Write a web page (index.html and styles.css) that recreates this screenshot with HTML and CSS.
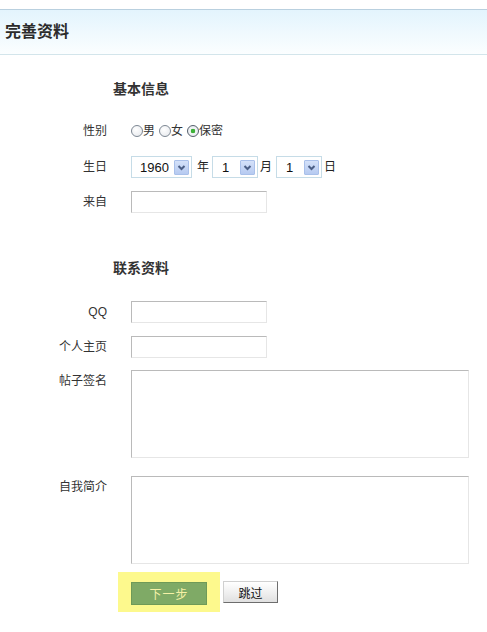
FILE: index.html
```html
<!DOCTYPE html>
<html lang="zh-CN">
<head>
<meta charset="utf-8">
<title>完善资料</title>
<link rel="stylesheet" href="styles.css">
</head>
<body>
<div class="header"><h1 class="title">完善资料</h1></div>
<form class="form">
  <h2 class="section section-first">基本信息</h2>
  <div class="row row-gender">
    <span class="label">性别</span>
    <div class="field radios">
      <label class="radio-item"><input type="radio" name="sex" class="radio">男</label>
      <label class="radio-item"><input type="radio" name="sex" class="radio">女</label>
      <label class="radio-item"><input type="radio" name="sex" class="radio" checked>保密</label>
    </div>
  </div>
  <div class="row row-birth">
    <span class="label">生日</span>
    <div class="field dates">
      <span class="sel sel-year"><select class="sel-box"><option>1960</option></select><span class="arrow"><svg width="13" height="13" viewBox="0 0 13 13"><path d="M3.5 5 L6.5 8 L9.5 5" fill="none" stroke="#4b5f86" stroke-width="2"/></svg></span></span>
      <span class="unit unit-year">年</span>
      <span class="sel sel-small"><select class="sel-box"><option>1</option></select><span class="arrow"><svg width="13" height="13" viewBox="0 0 13 13"><path d="M3.5 5 L6.5 8 L9.5 5" fill="none" stroke="#4b5f86" stroke-width="2"/></svg></span></span>
      <span class="unit unit-month">月</span>
      <span class="sel sel-small"><select class="sel-box"><option>1</option></select><span class="arrow"><svg width="13" height="13" viewBox="0 0 13 13"><path d="M3.5 5 L6.5 8 L9.5 5" fill="none" stroke="#4b5f86" stroke-width="2"/></svg></span></span>
      <span class="unit unit-day">日</span>
    </div>
  </div>
  <div class="row">
    <span class="label">来自</span>
    <div class="field"><input type="text" class="text"></div>
  </div>

  <h2 class="section section-second">联系资料</h2>
  <div class="row row-qq">
    <span class="label">QQ</span>
    <div class="field"><input type="text" class="text"></div>
  </div>
  <div class="row">
    <span class="label">个人主页</span>
    <div class="field"><input type="text" class="text"></div>
  </div>
  <div class="row row-sign">
    <span class="label">帖子签名</span>
    <div class="field"><textarea class="area"></textarea></div>
  </div>
  <div class="row row-intro">
    <span class="label">自我简介</span>
    <div class="field"><textarea class="area"></textarea></div>
  </div>
  <div class="actions">
    <div class="highlight"><button type="button" class="btn-next">下一步</button></div>
    <button type="button" class="btn-skip">跳过</button>
  </div>
</form>
</body>
</html>
```

FILE: styles.css
```css
* { box-sizing: border-box; }

body {
  margin: 0;
  background: #fff;
  color: #333;
  font-family: "Liberation Sans", "Noto Sans CJK SC", sans-serif;
  font-size: 12px;
}

.header {
  margin-top: 9px;
  height: 46px;
  border-top: 1px solid #b9d0df;
  border-bottom: 1px solid #d3e5eb;
  background: linear-gradient(#e3f4fd, #fbfeff);
  display: flex;
  align-items: center;
  padding-left: 5px;
}

.title {
  margin: 0;
  font-size: 16px;
  font-weight: bold;
  color: #2b2b2b;
  line-height: 20px;
}

.form {
  display: flex;
  flex-direction: column;
  margin: 0;
}

.section {
  margin: 0;
  padding-left: 113px;
  font-size: 14px;
  font-weight: bold;
  line-height: 22px;
  color: #333;
}
.section-first { margin-top: 23px; }
.section-second { margin-top: 44px; }

.row {
  display: grid;
  grid-template-columns: 107px 338px;
  column-gap: 24px;
  margin-top: 13px;
  align-items: start;
}
.row-gender { margin-top: 20px; }
.row-birth { margin-top: 14px; }
.row-qq { margin-top: 22px; }
.row-sign { margin-top: 12px; }
.row-intro { margin-top: 18px; }

.label {
  text-align: right;
  line-height: 22px;
  color: #333;
}

.field {
  display: flex;
  align-items: center;
  min-height: 22px;
}

/* radios */
.radios { gap: 4px; }
.radio-item {
  display: inline-flex;
  align-items: center;
  line-height: 22px;
}
.radio {
  appearance: none;
  -webkit-appearance: none;
  margin: 0;
  width: 12px;
  height: 12px;
  border: 1px solid #7d8793;
  border-radius: 50%;
  background: radial-gradient(circle at 40% 35%, #ffffff 0, #eceef1 70%, #d6dae0 100%);
  position: relative;
}
.radio:checked {
  border-color: #56606d;
  background: radial-gradient(circle, #3fb53a 0, #3cae38 2px, #f4f6f8 2.6px, #dfe3e8 100%);
}

/* selects */
.sel {
  display: inline-flex;
  align-items: center;
  justify-content: space-between;
  height: 22px;
  border: 1px solid #c6dce7;
  background: #fff;
  padding: 0 2px 0 8px;
}
.sel-year { width: 61px; }
.sel-small { width: 46px; padding-left: 9px; }
.sel-box {
  appearance: none;
  -webkit-appearance: none;
  border: none;
  background: transparent;
  padding: 0;
  margin: 0;
  font-family: "Liberation Sans", sans-serif;
  font-size: 13px;
  color: #111;
  outline: none;
}
.arrow {
  display: flex;
  align-items: center;
  justify-content: center;
  width: 15px;
  height: 15px;
  border: 1px solid #a9c0ea;
  background: linear-gradient(#d4e1f9, #b6caf1);
  border-radius: 1px;
}

.unit { line-height: 22px; color: #222; }
.unit-year { margin: 0 3px 0 5px; }
.unit-month { margin: 0 4px 0 2px; }
.unit-day { margin: 0 0 0 2px; }

/* text fields */
.text,
.area {
  margin: 0;
  border: 1px solid;
  border-color: #bababa #e6e6e6 #e6e6e6 #bababa;
  background: #fff;
  font-family: inherit;
  font-size: 12px;
  padding: 2px;
  outline: none;
}
.text { width: 136px; height: 22px; }
.area { width: 338px; height: 88px; resize: none; display: block; }

/* actions */
.actions {
  display: flex;
  align-items: center;
  gap: 3px;
  margin-top: 8px;
  padding-left: 118px;
}
.highlight {
  width: 102px;
  height: 40px;
  background: #fdf98d;
  padding: 10px 0 0 13px;
}
.btn-next {
  display: block;
  width: 76px;
  height: 23px;
  margin: 0;
  padding: 0;
  border: 1px solid #6f9a57;
  background: #7faa66;
  color: #f5f1a6;
  font-family: inherit;
  font-size: 12px;
  letter-spacing: 1px;
}
.btn-skip {
  width: 55px;
  height: 22px;
  margin: 0;
  padding: 0;
  border: 1px solid;
  border-color: #d0d0d0 #6d6d6d #6d6d6d #d0d0d0;
  background: linear-gradient(#ffffff, #f2f2f2 45%, #e0e0e0);
  color: #111;
  font-family: inherit;
  font-size: 12px;
}
```
